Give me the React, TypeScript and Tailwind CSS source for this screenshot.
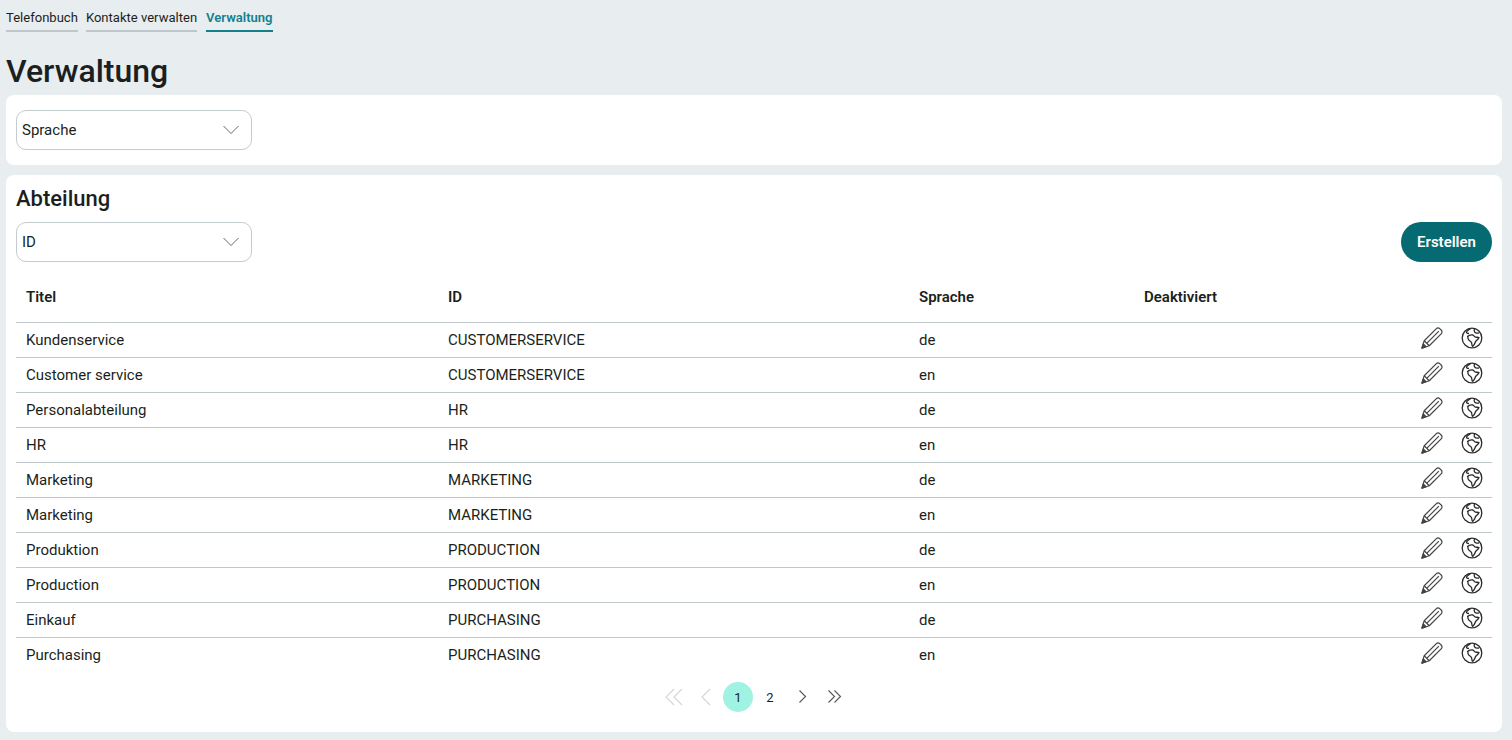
import React from 'react';

const rows = [
  ['Kundenservice', 'CUSTOMERSERVICE', 'de'],
  ['Customer service', 'CUSTOMERSERVICE', 'en'],
  ['Personalabteilung', 'HR', 'de'],
  ['HR', 'HR', 'en'],
  ['Marketing', 'MARKETING', 'de'],
  ['Marketing', 'MARKETING', 'en'],
  ['Produktion', 'PRODUCTION', 'de'],
  ['Production', 'PRODUCTION', 'en'],
  ['Einkauf', 'PURCHASING', 'de'],
  ['Purchasing', 'PURCHASING', 'en'],
];

function PencilIcon() {
  return (
    <svg width="22" height="22" viewBox="0 0 24 24" fill="none" stroke="#444" strokeWidth="1.300" strokeLinejoin="round">
      <path d="M1 23l2.500-8L16.500 2c1.200-1.200 3-1.200 4.200 0l1.300 1.300c1.200 1.200 1.200 3 0 4.200L9 20.500z" />
      <path d="M6.200 17.800L19.500 4.500M3.500 15L9 20.500" />
      <path d="M1 23l4.500-1.500-3-3z" fill="#444" />
    </svg>
  );
}

function GlobeIcon() {
  return (
    <svg width="22" height="22" viewBox="0 0 22 22" fill="none" stroke="#2b2b2b" strokeWidth="1.300" strokeLinejoin="round">
      <circle cx="11" cy="11" r="9.800" />
      <path d="M6.500 9.500c1.500-1.500 3.500-2 5.500-1.500 1 .5 1 2 2.500 2.200 1 .2 2.500-.2 3.500.3-.5 1.500-2 2.500-3 3.500s-1 2.500-1.800 3.500-1.200 2-1.700 1.800c-.8-.5-.5-2.500-1-3.800s-2-1.500-3-2.800c-.5-.8-.8-1.800-.5-2.700z" />
      <path d="M9.500 1.500C8 3 6 3.500 5.500 5c-.3 1 1 1.500 2.500 1.500" />
      <path d="M13.500 1.500c-.5 1.500-.5 3 .5 4s2.500.5 4 .5" />
    </svg>
  );
}

function Chevron({ dir, double, color, small }: { dir: 'left' | 'right'; double?: boolean; color: string; small?: boolean }) {
  const flip = dir === 'right' ? 'scale(-1 1) translate(-20 0)' : undefined;
  const size = small ? 15 : 20;
  return (
    <svg width={size} height={size} viewBox="0 0 20 20" fill="none" stroke={color} strokeWidth={small ? 1.500 : 1.100}>
      <g transform={flip}>
        {double ? (
          <>
            <path d="M10 2l-8 8 8 8" />
            <path d="M18 2l-8 8 8 8" />
          </>
        ) : (
          <path d="M14 2l-8 8 8 8" />
        )}
      </g>
    </svg>
  );
}

function Select({ label }: { label: string }) {
  return (
    <div className="flex h-10 w-[236px] items-center justify-between rounded-[10px] border border-[#c4cbce] bg-white pl-[5px] pr-[12px] text-[15px] text-[#1b1f20]">
      <span>{label}</span>
      <svg width="16" height="10" viewBox="0 0 16 10" fill="none" stroke="#666" strokeWidth="1">
        <path d="M.5 1L8 8.500 15.500 1" />
      </svg>
    </div>
  );
}

export default function App() {
  return (
    <div className="h-[740px] overflow-hidden bg-[#e8edf0] pl-[6px] pr-[10px] font-['Roboto',sans-serif] text-[#1b1f20]">
      {/* Tabs */}
      <div className="flex gap-2 pt-[10px] text-[13.05px] leading-4">
        <div className="h-[22px] border-b-2 border-[#c0c7ca]">Telefonbuch</div>
        <div className="h-[22px] border-b-2 border-[#c0c7ca]">Kontakte verwalten</div>
        <div className="ml-px h-[22px] border-b-2 border-[#14808c] font-semibold text-[#14808c]">Verwaltung</div>
      </div>

      <h1 className="mt-[19px] mb-[4px] text-[32px] leading-[40px] font-medium">Verwaltung</h1>

      <div className="rounded-lg bg-white px-[10px] py-[15px]">
        <Select label="Sprache" />
      </div>

      <div className="mt-[10px] h-[557px] rounded-lg bg-white px-[10px] pt-[11px]">
        <h2 className="mb-[10px] text-[22px] leading-[26px] font-medium">Abteilung</h2>
        <div className="flex items-center justify-between">
          <Select label="ID" />
          <button className="h-10 w-[91px] rounded-full bg-[#056a72] text-[15px] font-semibold text-white">Erstellen</button>
        </div>

        <table className="mt-[10px] w-full table-fixed text-[15px]">
          <colgroup>
            <col className="w-[422px]" />
            <col className="w-[471px]" />
            <col className="w-[225px]" />
            <col />
            <col className="w-[100px]" />
          </colgroup>
          <thead>
            <tr className="h-[50px] border-b border-[#c0c7ca] text-left">
              <th className="px-[10px] font-semibold">Titel</th>
              <th className="px-[10px] font-semibold">ID</th>
              <th className="px-[10px] font-semibold">Sprache</th>
              <th className="px-[10px] font-semibold">Deaktiviert</th>
              <th />
            </tr>
          </thead>
          <tbody>
            {rows.map((row, i) => (
              <tr key={i} className="h-[35px] border-b border-[#c0c7ca] last:border-b-transparent">
                {row.map((cell, j) => (
                  <td key={j} className="px-[10px] pt-[2px]">{cell}</td>
                ))}
                <td />
                <td className="pr-[9px]">
                  <div className="flex items-center justify-end gap-[18px] pb-[3px]">
                    <PencilIcon />
                    <GlobeIcon />
                  </div>
                </td>
              </tr>
            ))}
          </tbody>
        </table>

        {/* Pagination */}
        <div className="mt-[9px] flex items-center justify-center gap-[2px] text-[13px]">
          <span className="flex h-[30px] w-[30px] items-center justify-center"><Chevron dir="left" double color="#d3d6d8" /></span>
          <span className="flex h-[30px] w-[30px] items-center justify-center"><Chevron dir="left" color="#d3d6d8" /></span>
          <span className="flex h-[30px] w-[30px] items-center justify-center rounded-full bg-[#a0f2e3] pt-[2px]">1</span>
          <span className="flex h-[30px] w-[30px] items-center justify-center pt-[2px]">2</span>
          <span className="flex h-[30px] w-[30px] items-center justify-center"><Chevron dir="right" color="#555" small /></span>
          <span className="flex h-[30px] w-[30px] items-center justify-center"><Chevron dir="right" double color="#555" small /></span>
        </div>
      </div>
    </div>
  );
}
